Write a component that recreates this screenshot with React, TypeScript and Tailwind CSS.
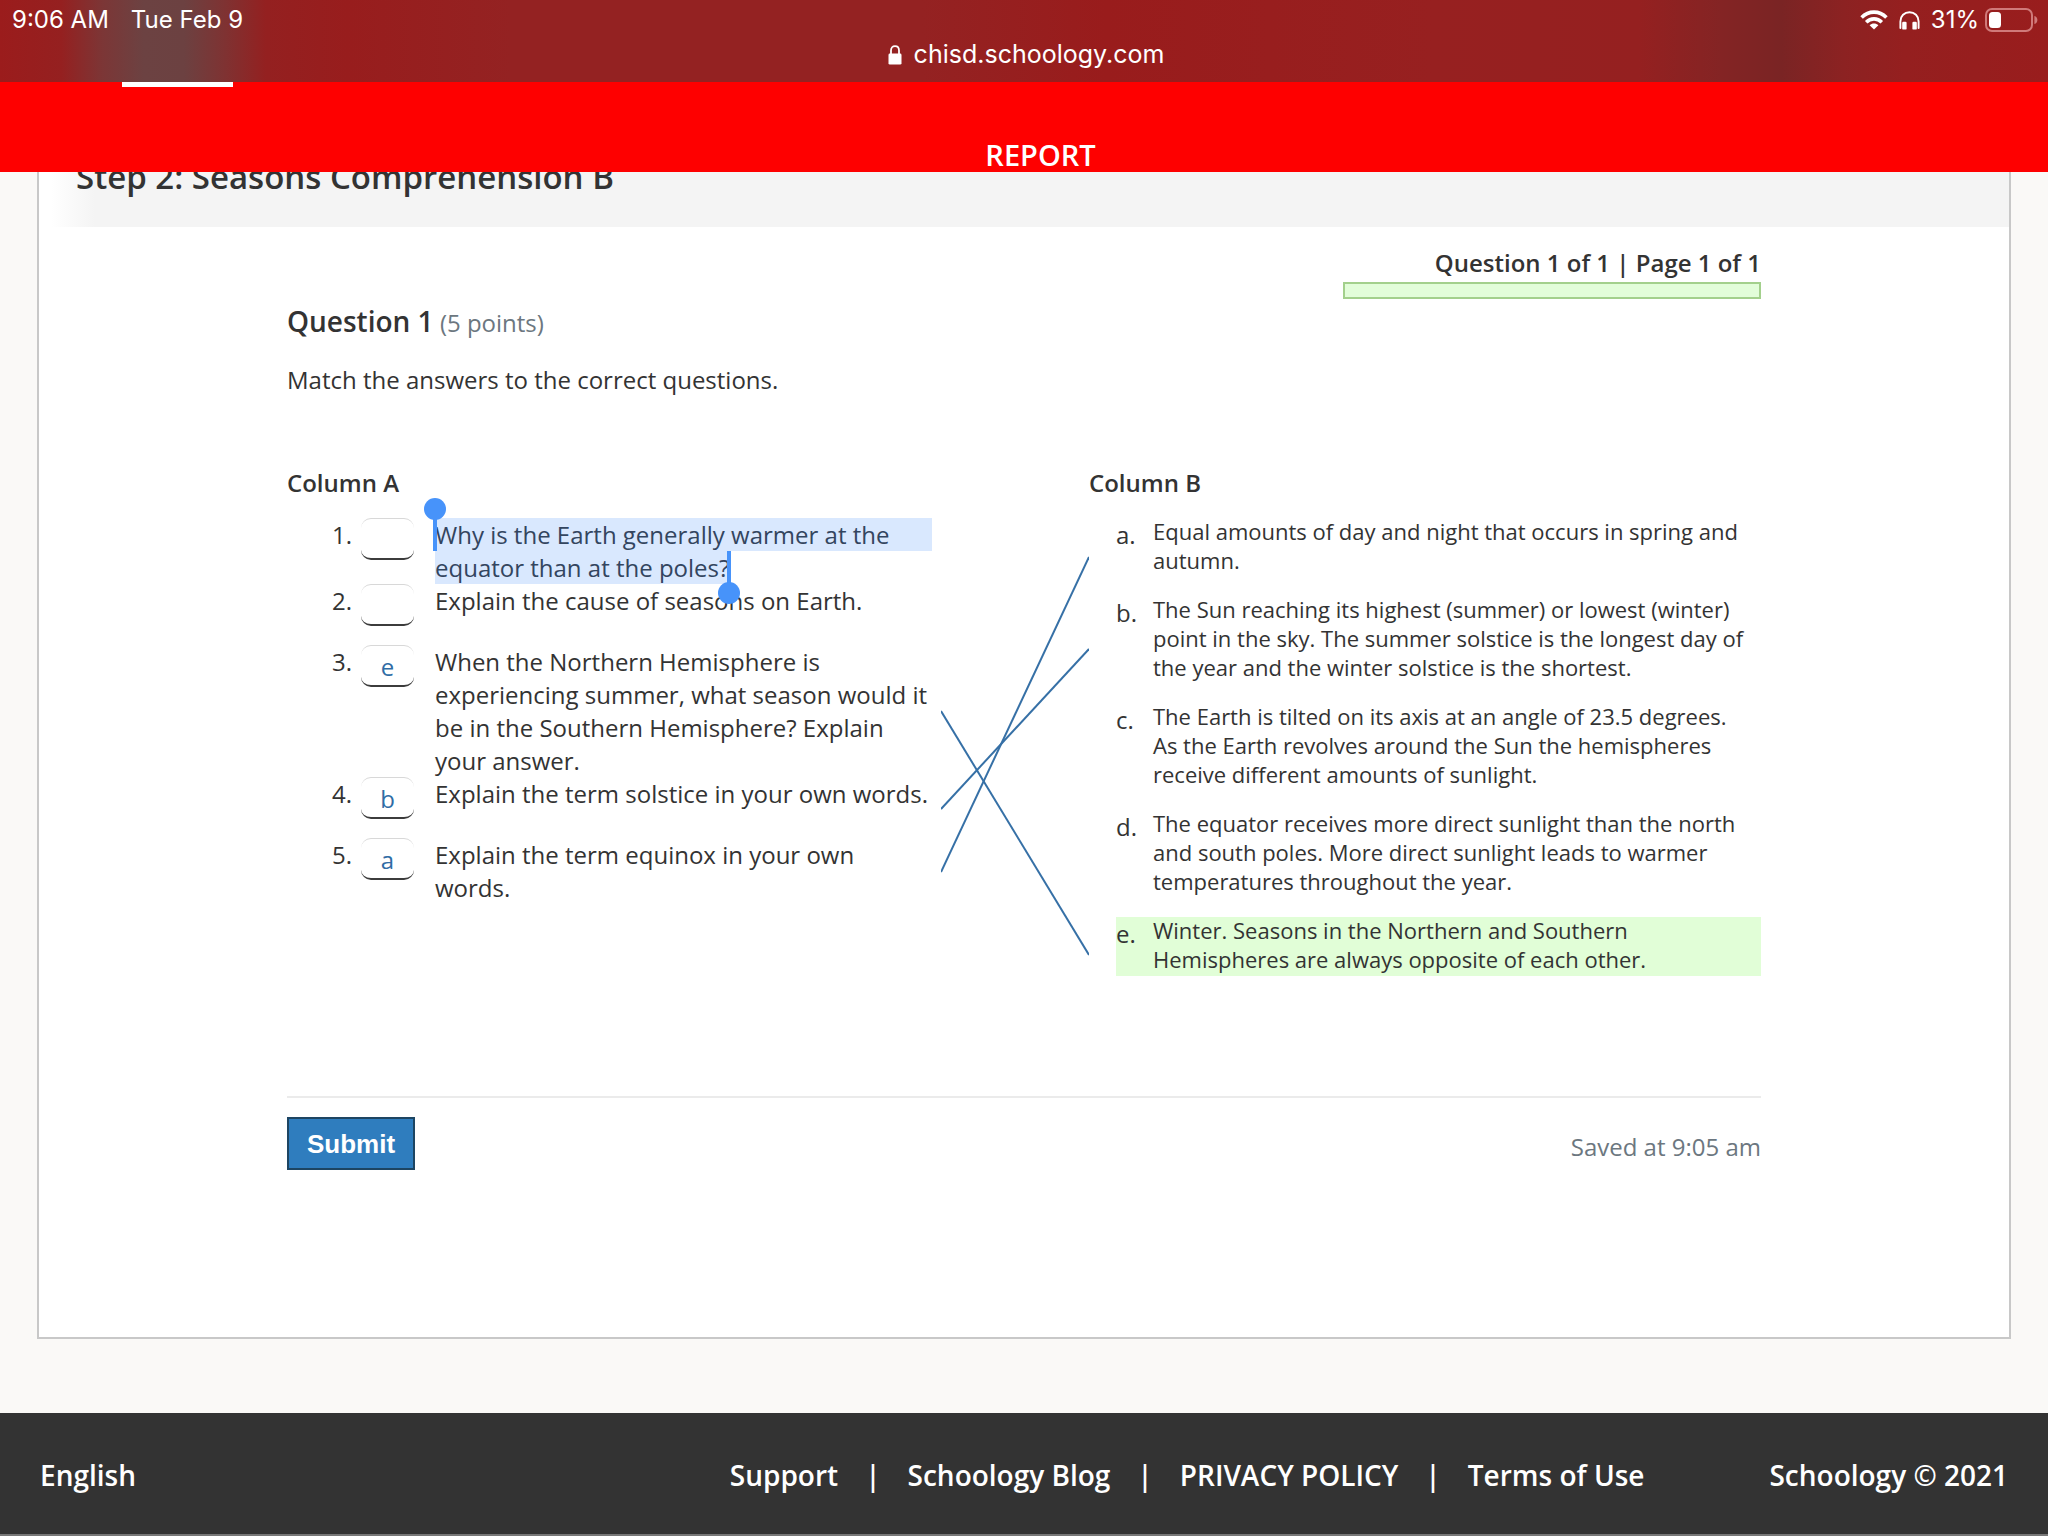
import { useState } from 'react';

type Question = { id: number; lines: string; answer: string };

const QUESTIONS: Question[] = [
  { id: 1, lines: 'Why is the Earth generally warmer at the equator than at the poles?', answer: '' },
  { id: 2, lines: 'Explain the cause of seasons on Earth.', answer: '' },
  {
    id: 3,
    lines: 'When the Northern Hemisphere is experiencing summer, what season would it be in the Southern Hemisphere? Explain your answer.',
    answer: 'e',
  },
  { id: 4, lines: 'Explain the term solstice in your own words.', answer: 'b' },
  { id: 5, lines: 'Explain the term equinox in your own words.', answer: 'a' },
];

const CHOICES = [
  { letter: 'a', text: 'Equal amounts of day and night that occurs in spring and autumn.' },
  {
    letter: 'b',
    text: 'The Sun reaching its highest (summer) or lowest (winter) point in the sky. The summer solstice is the longest day of the year and the winter solstice is the shortest.',
  },
  {
    letter: 'c',
    text: 'The Earth is tilted on its axis at an angle of 23.5 degrees. As the Earth revolves around the Sun the hemispheres receive different amounts of sunlight.',
  },
  {
    letter: 'd',
    text: 'The equator receives more direct sunlight than the north and south poles. More direct sunlight leads to warmer temperatures throughout the year.',
  },
  { letter: 'e', text: 'Winter. Seasons in the Northern and Southern Hemispheres are always opposite of each other.' },
];

const FOOTER_LINKS = ['Support', 'Schoology Blog', 'PRIVACY POLICY', 'Terms of Use'];

const WifiIcon = () => (
  <svg width="28" height="20" viewBox="0 0 28 20" fill="none" stroke="#fff" strokeWidth="3.6" aria-hidden="true">
    <path d="M1.6 7.4C8.6 0.4 19.4 0.4 26.4 7.4" />
    <path d="M6.2 12.2C10.6 7.8 17.4 7.8 21.8 12.2" />
    <path d="M14 19.6L9.6 15.2C12.2 12.8 15.8 12.8 18.4 15.2Z" fill="#fff" stroke="none" />
  </svg>
);

const HeadphonesIcon = () => (
  <svg width="21" height="19" viewBox="0 0 21 19" fill="none" aria-hidden="true">
    <path d="M1.4 17V10.4C1.4 5 5.4 1.2 10.5 1.2S19.6 5 19.6 10.4V17" stroke="#fff" strokeWidth="1.9" strokeLinecap="round" />
    <rect x="3.2" y="10.8" width="4.4" height="7.8" rx="1.2" fill="#fff" />
    <rect x="13.4" y="10.8" width="4.4" height="7.8" rx="1.2" fill="#fff" />
  </svg>
);

const BatteryIcon = () => (
  <svg width="53" height="24" viewBox="0 0 53 24" fill="none" aria-hidden="true">
    <rect x="1" y="1" width="46" height="22" rx="6" stroke="#d07a7a" strokeWidth="2" />
    <rect x="4" y="4" width="12" height="16" rx="3.5" fill="#fff" />
    <path d="M49.4 8C53.4 9 53.4 15 49.4 16Z" fill="#d07a7a" />
  </svg>
);

const LockIcon = () => (
  <svg width="14" height="20" viewBox="0 0 14 20" fill="none" aria-hidden="true">
    <path d="M3 9V5.4C3 2.8 4.6 1.1 7 1.1S11 2.8 11 5.4V9" stroke="#fff" strokeWidth="1.8" />
    <rect x="0.5" y="8.6" width="13" height="11" rx="1.4" fill="#fff" />
  </svg>
);

// Selected text with the two drag handles of the touch selection
const SelectedText = ({ children }: { children: string }) => (
  <span className="relative block bg-[linear-gradient(#d9e8fe,#d9e8fe)] bg-[length:100%_33px] bg-no-repeat text-[#33455f]">
    <span className="absolute -left-0.5 top-0 z-10 h-[33px] w-1 bg-[#4793fa]" />
    <span className="absolute -left-[11px] -top-5 z-10 size-[22px] rounded-full bg-[#4793fa]" />
    <span className="relative bg-[#d9e8fe]">
      {children}
      <span className="absolute -right-0.5 bottom-0 h-[33px] w-1 bg-[#4793fa]" />
      <span className="absolute -bottom-5 -right-[11px] size-[22px] rounded-full bg-[#4793fa]" />
    </span>
  </span>
);

export default function App() {
  const [answers, setAnswers] = useState<Record<number, string>>(
    Object.fromEntries(QUESTIONS.map(q => [q.id, q.answer]))
  );

  return (
    <div className="flex min-h-screen flex-col bg-[#faf9f7] font-['Open_Sans',sans-serif] text-[#333]">
      {/* Browser bar */}
      <div className="relative z-10 flex h-[82px] flex-col bg-[linear-gradient(90deg,#9b1c1c_0%,#952020_3%,#7c3636_5%,#6c4242_7%,#6c4141_9%,#7f3232_11%,#942020_13%,#981d1d_17%,#942222_25%,#942222_45%,#991c1c_54%,#972020_70%,#952020_80%,#842424_84%,#7a2424_87%,#8c2222_90%,#951f1f_93%,#991d1d_100%)] font-['Inter',sans-serif] text-white">
        <div className="flex h-10 items-center justify-between pl-3 pr-2.5 text-[24px]">
          <div className="flex gap-[22px]">
            <span>9:06 AM</span>
            <span>Tue Feb 9</span>
          </div>
          <div className="flex items-center gap-[11px]">
            <WifiIcon />
            <HeadphonesIcon />
            <div className="flex items-center gap-1.5">
              <span>31%</span>
              <BatteryIcon />
            </div>
          </div>
        </div>
        <div className="flex h-[30px] items-center justify-center gap-3 pl-1 text-[25px]">
          <LockIcon />
          <span>chisd.schoology.com</span>
        </div>
      </div>

      <header className="relative z-10 flex h-[90px] flex-col justify-between bg-[#fe0000]">
        <div className="ml-[122px] h-[5px] w-[111px] bg-white" />
        <p className="pl-[33px] text-center text-[29px] font-semibold leading-[34px] text-white">REPORT</p>
      </header>

      <main className="-mt-10 flex-1 px-[37px] pb-[74px]">
        <div className="border-2 border-t-0 border-[#c8c8c8] bg-white">
          <div className="flex h-[95px] items-center bg-[linear-gradient(90deg,#fff_12px,#f4f4f4_56px)] pb-1.5 pl-[37px]">
            <h1 className="text-[33px] font-semibold leading-10">Step 2: Seasons Comprehension B</h1>
          </div>

          <div className="px-[248px] pb-[167px] pt-5">
            <div className="ml-auto flex w-[418px] flex-col gap-[3px]">
              <p className="text-right text-[24px] font-semibold leading-8">Question 1 of 1 | Page 1 of 1</p>
              <div className="h-[17px] border-2 border-[#a3d08c] bg-[#e2fdd9]" />
            </div>

            <h2 className="mt-1 text-[28px] font-semibold leading-9">
              Question 1<span className="text-[24px] font-normal text-[#6c7780]"> (5 points)</span>
            </h2>
            <p className="mt-[22px] text-[24px] leading-[33px]">Match the answers to the correct questions.</p>

            <div className="mt-[70px] grid grid-cols-[654fr_148fr_672fr]">
              <section>
                <h3 className="text-[24px] font-semibold leading-[33px]">Column A</h3>
                <ol className="mt-[19px] pl-[45px] pr-[9px] text-[24px] leading-[33px]">
                  {QUESTIONS.map(q => (
                    <li key={q.id} className="flex min-h-[61px] items-start last:min-h-0">
                      <span className="w-[29px] shrink-0">{q.id}.</span>
                      <input
                        id={`answer-${q.id}`}
                        type="text"
                        maxLength={1}
                        value={answers[q.id]}
                        onChange={e => setAnswers({ ...answers, [q.id]: e.target.value })}
                        className="mr-[21px] h-[42px] w-[53px] shrink-0 rounded-[10px] border-x-0 border-b-2 border-t border-b-[#3c3c3c] border-t-[#d8d8d8] bg-white pt-0.5 text-center text-[#2f6ca5] outline-none"
                      />
                      <label htmlFor={`answer-${q.id}`} className="flex-1">
                        {q.id === 1 ? <SelectedText>{q.lines}</SelectedText> : q.lines}
                      </label>
                    </li>
                  ))}
                </ol>
              </section>

              {/* Lines from each answered question to its choice */}
              <svg className="mt-[52px] h-[458px] w-full" viewBox="0 0 148 458" preserveAspectRatio="none" fill="none" stroke="#3670a6" strokeWidth="2" aria-hidden="true">
                <path d="M0 193L148 437" />
                <path d="M0 291L148 131" />
                <path d="M0 354L148 39" />
              </svg>

              <section>
                <h3 className="text-[24px] font-semibold leading-[33px]">Column B</h3>
                <ul className="mt-[19px] flex flex-col gap-[19px] pl-[27px]">
                  {CHOICES.map(c => (
                    <li key={c.letter} className="flex items-start pb-0.5 pr-2 text-[22px] leading-[29px] last:bg-[#e1fed7]">
                      <span className="w-[37px] shrink-0 pt-0.5 text-[24px]">{c.letter}.</span>
                      <span className="-mt-px flex-1">{c.text}</span>
                    </li>
                  ))}
                </ul>
              </section>
            </div>

            <div className="mt-[120px] flex items-center justify-between border-t-2 border-[#ebebeb] pt-[19px]">
              <button type="button" className="h-[53px] border-2 border-[#1d4562] bg-[#2f7dbe] px-[18px] pt-0.5 font-['Liberation_Sans',Arial,sans-serif] text-[26px] font-bold text-white">
                Submit
              </button>
              <p className="pt-1.5 text-[24px] leading-[33px] text-[#6c7780]">Saved at 9:05 am</p>
            </div>
          </div>
        </div>
      </main>

      <footer className="flex h-[123px] items-center justify-between border-b-2 border-[#777] bg-[#333] px-10 pt-0.5 text-[28px] font-semibold text-white">
        <a href="#language">English</a>
        <div className="flex gap-[125px]">
          <nav className="flex gap-[27px]">
            {FOOTER_LINKS.map((name, i) => (
              <div key={name} className="flex gap-[27px]">
                {i > 0 && <span>|</span>}
                <a href={`#link-${i}`}>{name}</a>
              </div>
            ))}
          </nav>
          <span>Schoology © 2021</span>
        </div>
      </footer>
    </div>
  );
}
